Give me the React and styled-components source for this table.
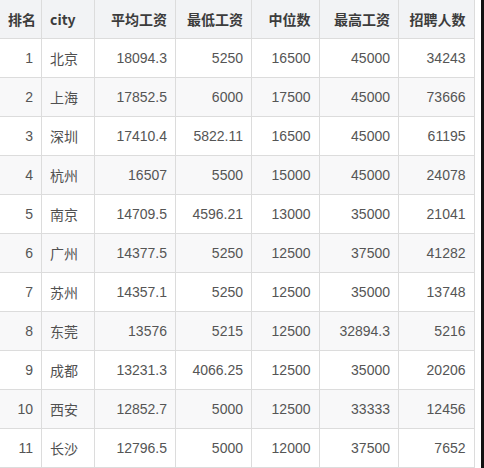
import React from "react";
import styled, { createGlobalStyle } from "styled-components";

const Global = createGlobalStyle`
  html, body { margin: 0; padding: 0; background: #fff; }
  body { overflow: hidden; }
`;

const Frame = styled.div`
  display: flex;
  width: 484px;
  height: 468px;
  overflow: hidden;
`;

const Scroller = styled.div`
  flex: 1;
  overflow: hidden;
  background: #fff;
`;

const Edge = styled.div`
  width: 3px;
  background: #111;
`;

const Table = styled.table`
  border-collapse: collapse;
  table-layout: fixed;
  width: 474px;
  font-family: "Liberation Sans", "Noto Sans CJK SC", Arial, sans-serif;
  font-size: 14px;
  color: #555;
`;

const HeadCell = styled.th`
  height: 38px;
  padding: 0 8px;
  box-sizing: border-box;
  background: #f2f3f5;
  font-weight: bold;
  font-family: "Noto Sans CJK SC", "Liberation Sans", sans-serif;
  color: #3c3c3c;
  text-align: ${(p) => (p.$left ? "left" : "right")};
  border: 1px solid #dcdcdc;
  border-top: none;
  &:first-child { border-left: none; }
  white-space: nowrap;
  overflow: hidden;
`;

const Row = styled.tr`
  background: ${(p) => (p.$even ? "#f8f8f9" : "#fff")};
`;

const Cell = styled.td`
  height: 39px;
  padding: 0 8px;
  box-sizing: border-box;
  text-align: ${(p) => (p.$left ? "left" : "right")};
  font-family: ${(p) =>
    p.$cjk
      ? '"Noto Sans CJK SC", "Liberation Sans", sans-serif'
      : '"Liberation Sans", Arial, sans-serif'};
  color: ${(p) => (p.$cjk ? "#505050" : "#555")};
  border: 1px solid #dcdcdc;
  &:first-child { border-left: none; }
  white-space: nowrap;
  overflow: hidden;
`;

const cols = [41.5, 52.5, 81.5, 76, 67.5, 79.5, 75.5];

const headers = ["排名", "city", "平均工资", "最低工资", "中位数", "最高工资", "招聘人数"];

const data = [
  [1, "北京", "18094.3", "5250", "16500", "45000", "34243"],
  [2, "上海", "17852.5", "6000", "17500", "45000", "73666"],
  [3, "深圳", "17410.4", "5822.11", "16500", "45000", "61195"],
  [4, "杭州", "16507", "5500", "15000", "45000", "24078"],
  [5, "南京", "14709.5", "4596.21", "13000", "35000", "21041"],
  [6, "广州", "14377.5", "5250", "12500", "37500", "41282"],
  [7, "苏州", "14357.1", "5250", "12500", "35000", "13748"],
  [8, "东莞", "13576", "5215", "12500", "32894.3", "5216"],
  [9, "成都", "13231.3", "4066.25", "12500", "35000", "20206"],
  [10, "西安", "12852.7", "5000", "12500", "33333", "12456"],
  [11, "长沙", "12796.5", "5000", "12000", "37500", "7652"],
];

export default function App() {
  return (
    <>
      <Global />
      <Frame>
        <Scroller>
          <Table>
            <colgroup>
              {cols.map((w, i) => (
                <col key={i} style={{ width: w + "px" }} />
              ))}
            </colgroup>
            <thead>
              <tr>
                {headers.map((h, i) => (
                  <HeadCell key={h} $left={i === 1}>
                    {h}
                  </HeadCell>
                ))}
              </tr>
            </thead>
            <tbody>
              {data.map((r, ri) => (
                <Row key={ri} $even={ri % 2 === 1}>
                  {r.map((v, ci) => (
                    <Cell key={ci} $left={ci === 1} $cjk={ci === 1}>
                      {v}
                    </Cell>
                  ))}
                </Row>
              ))}
            </tbody>
          </Table>
        </Scroller>
        <Edge />
      </Frame>
    </>
  );
}
